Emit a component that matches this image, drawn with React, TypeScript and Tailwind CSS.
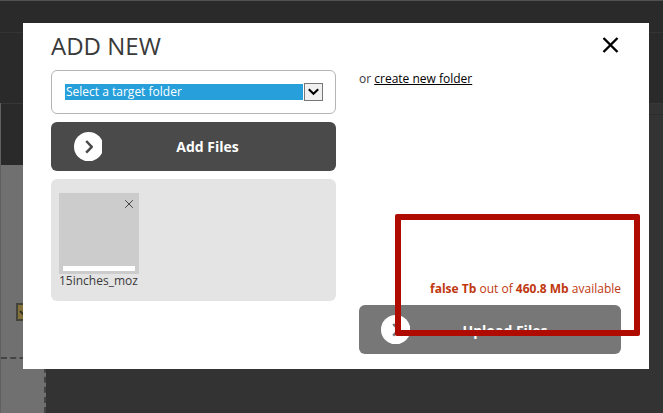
import type { ReactNode } from "react";

function ArrowBadge({ muted = false }: { muted?: boolean }) {
  return (
    <svg width={muted ? 29 : 28} height="29" viewBox={muted ? "0 0 29 29" : "0 0 28 29"} className="block">
      <circle cx="14.7" cy="14.7" r="14.7" fill="#fff" />
      <path
        d="M12.2 9 17.8 14.8 12.2 20.6"
        fill="none"
        stroke={muted ? "#777" : "#4a4a4a"}
        strokeWidth="2.5"
        strokeLinejoin="round"
      />
    </svg>
  );
}

function ActionButton({ children, muted = false }: { children: ReactNode; muted?: boolean }) {
  return (
    <button
      className={`grid h-[49px] w-full items-center rounded-md pb-px text-[14px] font-bold text-white ${
        muted
          ? "grid-cols-[52px_1fr_44px] bg-[#777777] pl-[22px]"
          : "grid-cols-[52px_1fr_47px] bg-[#4a4a4a] pl-[23px]"
      }`}
    >
      <ArrowBadge muted={muted} />
      <span className={muted ? "pt-[3px]" : "pt-px"}>{children}</span>
    </button>
  );
}

function PageBackdrop() {
  return (
    <div className="flex h-full flex-col border-t border-[#505252]">
      <div className="h-[31px] bg-[#2a2a2a]" />
      <div className="h-[71px] border-t border-[#343434] bg-[#2a2a2a]" />
      <div className="flex grow">
        <div className="flex w-[46px] flex-col border-l border-[#606060]">
          <div className="h-[62px] border-t border-[#373737] bg-[#2a2a2a]" />
          <div className="flex grow flex-col border-r-2 border-dashed border-[#444] bg-[#707070]">
            <div className="h-[192px] pt-[138px]">
              <div className="ml-[15px] flex h-[18px] w-[18px] items-center justify-center border-2 border-[#44443a] bg-[#84713a]">
                <svg width="12" height="10" viewBox="0 0 12 10">
                  <path d="M1 4 4 7 10 1" fill="none" stroke="#353525" strokeWidth="2" />
                </svg>
              </div>
            </div>
            <div className="border-t-2 border-dashed border-[#444]" />
          </div>
        </div>
        <div className="grow bg-[#333]">
          <div className="h-[12px] border-b border-t border-b-[#2b2b2b] border-t-[#373737]" />
        </div>
      </div>
    </div>
  );
}

export default function App() {
  return (
    <div className="relative h-[413px] w-[663px] overflow-hidden bg-[#333] font-['Open_Sans',sans-serif] text-[12px] leading-4 text-[#3a3a3a]">
      <PageBackdrop />
      <section className="absolute left-[23px] top-[23px] h-[346px] w-[626px] bg-white pl-7 pr-7 pt-[6px]">
        <header className="flex h-[41px] justify-between">
          <h1 className="text-[24px] leading-[34px]">ADD NEW</h1>
          <button aria-label="Close" className="h-[18px] pr-[2px] pt-2">
            <svg width="17" height="16" viewBox="0 0 17 16" stroke="#000" strokeWidth="2.4">
              <path d="M1.5 1 15.5 15M15.5 1 1.5 15" />
            </svg>
          </button>
        </header>
        <div className="flex gap-[23px]">
          <div className="flex w-[285px] flex-col gap-2">
            <div className="flex h-[44px] items-center rounded-md border border-[#b5b5b5] pl-[13px]">
              <div className="flex h-4 w-[238px] items-center bg-[#279fda] pl-px text-white">Select a target folder</div>
              <button
                aria-label="Open folder list"
                className="ml-px flex h-[18px] w-[19px] items-center justify-center border border-[#777] bg-[#f0f0f0]"
              >
                <svg width="11" height="8" viewBox="0 0 11 8">
                  <path d="M.8 1.2 5.5 5.8 10.2 1.2" fill="none" stroke="#000" strokeWidth="2" />
                </svg>
              </button>
            </div>
            <ActionButton>Add Files</ActionButton>
            <div className="h-[122px] rounded-md bg-[#e4e4e4] pl-2 pt-[14px]">
              <div className="flex h-[81px] w-[80px] flex-col justify-between bg-[#cccccc] px-1 pb-[3px] pt-[7px]">
                <svg width="8" height="8" viewBox="0 0 8 8" stroke="#444" className="ml-auto mr-[2px]">
                  <path d="M.2.2 7.8 7.8M7.8.2.2 7.8" />
                </svg>
                <div className="h-[5px] bg-white" />
              </div>
              <div className="-mt-px">15inches_moz</div>
            </div>
          </div>
          <div className="flex w-[262px] flex-col pt-px">
            <p className="h-[210px]">
              or <a className="text-black underline underline-offset-1">create new folder</a>
            </p>
            <p className="h-6 text-right text-[#c03810]">
              <b>false Tb</b> out of <b>460.8 Mb</b> available
            </p>
            <ActionButton muted>Upload Files</ActionButton>
          </div>
        </div>
      </section>
      <div className="absolute left-[395px] top-[214px] h-[122px] w-[245px] rounded-[2px] border-[6px] border-[#b00b00]" />
    </div>
  );
}
